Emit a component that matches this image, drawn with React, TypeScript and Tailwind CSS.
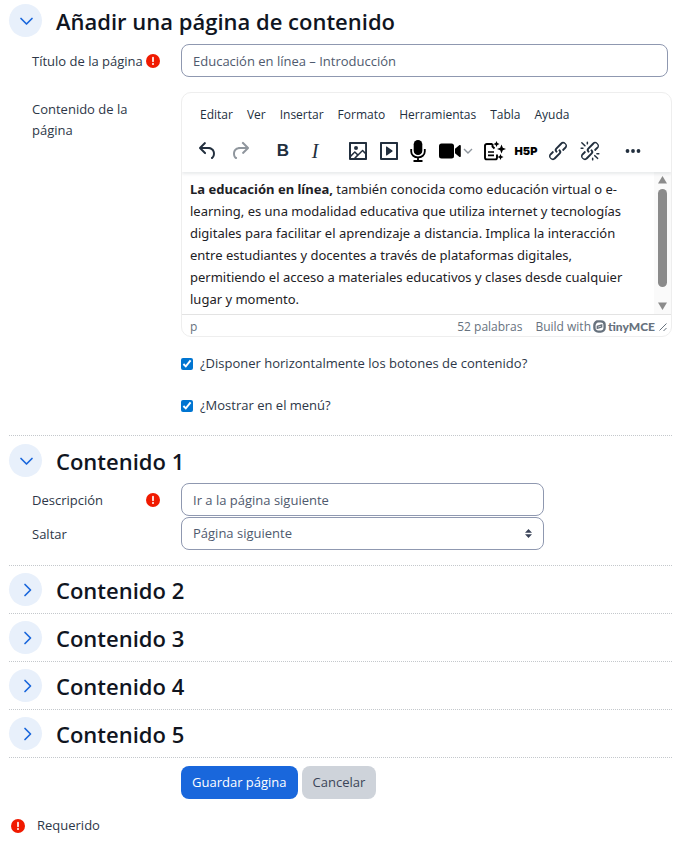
import React, { useState } from 'react';

const icons = {
  undo: "M6.4 8H12c3.7 0 6.2 2 6.8 5.1.6 2.7-.4 5.6-2.3 6.8a1 1 0 0 1-1-1.8c1.1-.6 1.8-2.7 1.4-4.6-.5-2.1-2.1-3.5-4.9-3.5H6.4l3.3 3.3a1 1 0 1 1-1.4 1.4l-5-5a1 1 0 0 1 0-1.4l5-5a1 1 0 0 1 1.4 1.4L6.4 8Z",
  redo: "M17.6 10H12c-2.8 0-4.4 1.4-4.9 3.5-.4 2 .3 4 1.4 4.6a1 1 0 1 1-1 1.8c-2-1.2-2.9-4.1-2.3-6.8.6-3 3-5.1 6.8-5.1h5.6l-3.3-3.3a1 1 0 1 1 1.4-1.4l5 5a1 1 0 0 1 0 1.4l-5 5a1 1 0 0 1-1.4-1.4l3.3-3.3Z",
  image: "m5 15.7 3.3-3.2c.3-.3.7-.3 1 0L12 15l4.1-4c.3-.4.8-.4 1 0l2 1.9V5H5v10.7ZM5 18V19h3l2.8-2.9-2-2L5 17.9Zm14-3-2.5-2.4-6.4 6.5H19v-4ZM4 3h16c.6 0 1 .4 1 1v16c0 .6-.4 1-1 1H4a1 1 0 0 1-1-1V4c0-.6.4-1 1-1Zm6 8a2 2 0 1 0 0-4 2 2 0 0 0 0 4Z",
  media: "M4 3h16c.6 0 1 .4 1 1v16c0 .6-.4 1-1 1H4a1 1 0 0 1-1-1V4c0-.6.4-1 1-1Zm1 2v14h14V5H5Zm4.8 2.6 5.6 4a.5.5 0 0 1 0 .8l-5.6 4A.5.5 0 0 1 9 16V8a.5.5 0 0 1 .8-.4Z",
  link: "M6.2 12.3a1 1 0 0 1 1.4 1.4l-2 2a2 2 0 1 0 2.6 2.8l4.8-4.8a1 1 0 0 0 0-1.4 1 1 0 1 1 1.4-1.3 2.9 2.9 0 0 1 0 4L9.6 20a3.9 3.9 0 0 1-5.5-5.5l2-2Zm11.6-.6a1 1 0 0 1-1.4-1.4l2-2a2 2 0 1 0-2.6-2.8L11 10.3a1 1 0 0 0 0 1.4A1 1 0 1 1 9.6 13a2.9 2.9 0 0 1 0-4L14.4 4a3.9 3.9 0 0 1 5.5 5.5l-2 2Z",
  unlink: "M6.2 12.3a1 1 0 0 1 1.4 1.4l-2 2a2 2 0 1 0 2.6 2.8l4.8-4.8a1 1 0 0 0 0-1.4 1 1 0 1 1 1.4-1.3 2.9 2.9 0 0 1 0 4L9.6 20a3.9 3.9 0 0 1-5.5-5.5l2-2Zm11.6-.6a1 1 0 0 1-1.4-1.4l2.1-2a2 2 0 1 0-2.7-2.8L11 10.3a1 1 0 0 0 0 1.4A1 1 0 1 1 9.6 13a2.9 2.9 0 0 1 0-4L14.4 4a3.9 3.9 0 0 1 5.5 5.5l-2 2ZM7.6 6.3a.8.8 0 0 1-1 1.1L3.3 4.2a.7.7 0 1 1 1-1l3.2 3.1ZM5.1 8.6a.8.8 0 0 1 0 1.5H3a.8.8 0 0 1 0-1.5H5Zm5-3.5a.8.8 0 0 1-1.5 0V3a.8.8 0 0 1 1.5 0V5Zm6 11.8a.8.8 0 0 1 1-1l3.2 3.2a.8.8 0 0 1-1 1L16 17Zm-2.2 2a.8.8 0 0 1 1.5 0V21a.8.8 0 0 1-1.5 0V19Zm5-3.5a.7.7 0 1 1 0-1.5H21a.8.8 0 0 1 0 1.5H19Z",
};

const menus = ["Editar", "Ver", "Insertar", "Formato", "Herramientas", "Tabla", "Ayuda"];

const Glyph: React.FC<{ d: string }> = ({ d }) => (
  <svg className="w-6 h-6" viewBox="0 0 24 24" fill="currentColor">
    <path fillRule="evenodd" d={d} />
  </svg>
);

const ToolButton: React.FC<{ label: string; className?: string; children: React.ReactNode }> = ({
  label,
  className = "w-8",
  children,
}) => (
  <button type="button" aria-label={label} className={`flex h-7 shrink-0 items-center justify-center ${className}`}>
    {children}
  </button>
);

const Required: React.FC = () => (
  <svg className="w-[14px] h-[14px] shrink-0" viewBox="0 0 14 14" role="img" aria-label="Requerido">
    <circle cx="7" cy="7" r="7" fill="#f01a00" />
    <path d="M7 3.7v3.6" stroke="#fff" strokeWidth="1.7" strokeLinecap="round" />
    <circle cx="7" cy="9.9" r="1" fill="#fff" />
  </svg>
);

const SectionHeader: React.FC<{ title: string; open: boolean; onToggle: () => void }> = ({ title, open, onToggle }) => (
  <div className="flex items-center gap-[14px]">
    <button
      type="button"
      aria-label={title}
      aria-expanded={open}
      onClick={onToggle}
      className="flex h-[33px] w-[33px] shrink-0 items-center justify-center rounded-full bg-[#e8f0fb] text-[#1967dc]"
    >
      <svg className="w-4 h-4" viewBox="0 0 16 16" fill="none" stroke="currentColor" strokeWidth="1.7" strokeLinecap="round" strokeLinejoin="round">
        <path d={open ? "M3 5.5 8.500 11 14 5.500" : "M7 2.500 12.500 8 7 13.500"} />
      </svg>
    </button>
    <h3 className="text-[22px] leading-8 font-semibold text-[#10151f]">{title}</h3>
  </div>
);

const Row: React.FC<{ label?: string; htmlFor?: string; required?: boolean; children: React.ReactNode }> = ({
  label,
  htmlFor,
  required,
  children,
}) => (
  <div className="flex pl-[23px]">
    <div className="flex w-[149px] shrink-0 items-start justify-between pr-[21px] pt-[7px]">
      {label && <label htmlFor={htmlFor} className="leading-[21px]">{label}</label>}
      {required && <span className="flex h-5 items-center"><Required /></span>}
    </div>
    <div className="min-w-0 flex-1">{children}</div>
  </div>
);

const Editor: React.FC = () => (
  <div className="overflow-hidden rounded-[10px] border border-[#eeeeee] bg-white">
    <div className="relative shadow-[0_2px_3px_rgba(34,47,62,0.10)]">
      <div className="flex h-11 items-center gap-[14px] pl-[18px] text-[#222f3e]">
        {menus.map((menu) => (
          <button key={menu} type="button" className="text-[12px]">{menu}</button>
        ))}
      </div>
      <div className="flex h-[35px] items-start gap-[11px] pl-[10px] text-[#222f3e]">
        <div className="flex">
          <ToolButton label="Deshacer"><Glyph d={icons.undo} /></ToolButton>
          <ToolButton label="Rehacer" className="w-8 opacity-50"><Glyph d={icons.redo} /></ToolButton>
        </div>
        <div className="flex">
          <ToolButton label="Negrita"><span className="font-['Liberation_Sans'] text-[17px] font-bold">B</span></ToolButton>
          <ToolButton label="Cursiva"><span className="font-['Liberation_Serif'] text-[20px] italic">I</span></ToolButton>
        </div>
        <div className="flex">
          <ToolButton label="Imagen" className="w-[31px]"><Glyph d={icons.image} /></ToolButton>
          <ToolButton label="Multimedia" className="w-[31px]"><Glyph d={icons.media} /></ToolButton>
          <ToolButton label="Grabar audio" className="w-7 text-black">
            <svg className="w-4 h-[22px]" viewBox="0 0 16 22" fill="none" stroke="currentColor" strokeWidth="1.8">
              <rect x="3.7" y="0" width="8.6" height="15" rx="4.3" fill="currentColor" stroke="none" />
              <path d="M1.2 9v2.500c0 3.500 3 5.900 6.800 5.900s6.800-2.400 6.800-5.900V9M8 17v4M3.500 21h9" />
            </svg>
          </ToolButton>
          <ToolButton label="Grabar vídeo" className="w-12 gap-[2px] text-black">
            <svg className="w-[22px] h-4" viewBox="0 0 22 16" fill="currentColor">
              <rect x="0" y="0.5" width="15" height="15" rx="2.5" />
              <path d="M16 5.800 20.200 2.200c.8-.6 1.600-.2 1.600.8v10c0 1-.8 1.400-1.600.8L16 10.200Z" />
            </svg>
            <svg className="w-[10px] h-[10px] text-[#8e959d]" viewBox="0 0 10 10" fill="none" stroke="currentColor" strokeWidth="1.4">
              <path d="m1 3 4 4 4-4" />
            </svg>
          </ToolButton>
          <ToolButton label="Asistente de IA" className="w-[30px] text-black">
            <svg className="w-[22px] h-5" viewBox="0 0 22 20" fill="none" stroke="currentColor" strokeWidth="1.9">
              <path d="M8.500 3H2.800C1.800 3 1 3.700 1 4.600v12.200c0 .9.800 1.600 1.800 1.600h8.400c1 0 1.800-.7 1.800-1.600v-3.300M8.500 3v2.500l2 2" />
              <path strokeWidth="1.6" d="M4 11h6M4 14.400h6" />
              <path stroke="none" fill="currentColor" d="m12.500 0 .9 2.100 2.100.9-2.100.9-.9 2.100-.9-2.100L9.500 3l2.100-.9ZM17.500 3.500l1.300 3.200L22 8l-3.200 1.300-1.300 3.200-1.300-3.200L13 8l3.200-1.300ZM16.500 13l.9 2.100 2.100.9-2.100.9-.9 2.100-.9-2.100-2.100-.9 2.100-.9Z" />
            </svg>
          </ToolButton>
          <ToolButton label="Insertar H5P" className="w-8 text-black">
            <span className="font-[Inter] text-[11px] font-black">H5P</span>
          </ToolButton>
          <ToolButton label="Enlace"><Glyph d={icons.link} /></ToolButton>
          <ToolButton label="Quitar enlace"><Glyph d={icons.unlink} /></ToolButton>
        </div>
        <ToolButton label="Más">
          <svg className="w-4 h-4" viewBox="0 0 16 16" fill="currentColor">
            <circle cx="2.5" cy="8" r="1.9" />
            <circle cx="8" cy="8" r="1.9" />
            <circle cx="13.5" cy="8" r="1.9" />
          </svg>
        </ToolButton>
      </div>
    </div>

    <div className="flex h-[142px]">
      <div
        id="contents"
        role="textbox"
        aria-multiline="true"
        aria-label="Contenido de la página"
        contentEditable
        suppressContentEditableWarning
        className="min-w-0 flex-1 overflow-hidden pl-2 pr-3 pt-[6px] font-['Noto_Sans',sans-serif] text-[13px] leading-[22px] text-[#1d2125] outline-none"
      >
        <p>
          <strong>La educación en línea,</strong> también conocida como educación virtual o e-learning, es una
          modalidad educativa que utiliza internet y tecnologías digitales para facilitar el aprendizaje a distancia.
          Implica la interacción entre estudiantes y docentes a través de plataformas digitales, permitiendo el acceso
          a materiales educativos y clases desde cualquier lugar y momento.
        </p>
      </div>
      <div className="flex w-[17px] flex-col items-center bg-[#fafafa] py-1" aria-hidden="true">
        <svg className="w-[9px] h-2" viewBox="0 0 9 8" fill="#8b8b8b"><path d="M4.500 0 9 7.500H0Z" /></svg>
        <div className="mt-[5px] h-[98px] w-[9px] rounded-full bg-[#8b8b8b]" />
        <svg className="mt-auto w-[9px] h-2" viewBox="0 0 9 8" fill="#8b8b8b"><path d="M4.500 8 9 .5H0Z" /></svg>
      </div>
    </div>

    <div className="flex h-[22px] items-center border-t border-[#e3e3e3] pt-[2px] pl-2 pr-[3px] text-[12px] text-[#67727e]">
      <span className="flex-1">p</span>
      <span>52 palabras</span>
      <a href="#tiny" className="ml-[13px] flex items-center gap-[2px]">
        Build with
        <svg className="w-[13px] h-[13px]" viewBox="0 0 12 12" fill="none" stroke="currentColor">
          <path strokeWidth="2.2" d="M3.800 1.300h3.400c2 0 3.500 1.200 3.500 3.100v2.800c0 2-1.500 3.500-3.500 3.500H4.800c-2 0-3.500-1.500-3.500-3.500V4.800c0-1.400.9-2.600 2.500-3.500Z" />
          <path strokeWidth="1.3" d="M4 7.700V5.800l4-1.300v1.900Z" />
        </svg>
        <span className="font-[Lato] text-[12px] font-black">tinyMCE</span>
      </a>
      <svg className="ml-[3px] w-[10px] h-[10px]" viewBox="0 0 10 10" fill="none" stroke="currentColor" strokeWidth="1">
        <path d="m1.500 8.500 7-7M5.500 9l3-3" />
      </svg>
    </div>
  </div>
);

const inputStyle =
  "block h-[33px] w-full rounded-lg border border-[#8f98b0] bg-white px-[11px] text-[13px] text-[#4f5a6e] outline-none";

const App: React.FC = () => {
  const [open, setOpen] = useState<Record<number, boolean>>({ 0: true, 1: true });
  const toggle = (n: number) => setOpen((prev) => ({ ...prev, [n]: !prev[n] }));

  return (
    <form
      onSubmit={(e) => e.preventDefault()}
      className="bg-white pl-[9px] pr-2 pb-2 font-['Open_Sans','Noto_Sans',sans-serif] text-[13px] text-[#2d3748]"
    >
      <section className="border-b border-dotted border-[#c4c8cc] pt-1">
        <SectionHeader title="Añadir una página de contenido" open={!!open[0]} onToggle={() => toggle(0)} />
        {open[0] && (
          <div className="pt-[7px] pb-[19px]">
            <Row label="Título de la página" htmlFor="title" required>
              <div className="pr-1">
                <input id="title" type="text" defaultValue="Educación en línea – Introducción" className={inputStyle} />
              </div>
            </Row>
            <div className="mt-[15px]">
              <Row label="Contenido de la página" htmlFor="contents">
                <Editor />
              </Row>
            </div>
            <div className="mt-4 flex flex-col gap-[21px] pl-[172px]">
              <label className="flex h-[21px] items-center gap-[7px]">
                <input type="checkbox" defaultChecked className="h-3 w-3 accent-[#0075d1]" />
                ¿Disponer horizontalmente los botones de contenido?
              </label>
              <label className="flex h-[21px] items-center gap-[7px]">
                <input type="checkbox" defaultChecked className="h-3 w-3 accent-[#0075d1]" />
                ¿Mostrar en el menú?
              </label>
            </div>
          </div>
        )}
      </section>

      <section className="border-b border-dotted border-[#c4c8cc] pt-2">
        <SectionHeader title="Contenido 1" open={!!open[1]} onToggle={() => toggle(1)} />
        {open[1] && (
          <div className="flex flex-col gap-px pt-[6px] pb-[15px]">
            <Row label="Descripción" htmlFor="description" required>
              <input
                id="description"
                type="text"
                defaultValue="Ir a la página siguiente"
                className={`${inputStyle} max-w-[363px]`}
              />
            </Row>
            <Row label="Saltar" htmlFor="jump">
              <div className="relative max-w-[363px]">
                <select id="jump" className={`${inputStyle} appearance-none`}>
                  <option>Página siguiente</option>
                </select>
                <svg
                  className="pointer-events-none absolute right-3 top-3 w-[7px] h-[9px]"
                  viewBox="0 0 7 9"
                  fill="#3a4358"
                >
                  <path d="M3.500 0 7 3.700H0ZM3.500 9 0 5.300h7Z" />
                </svg>
              </div>
            </Row>
          </div>
        )}
      </section>

      {[2, 3, 4, 5].map((n) => (
        <section key={n} className="border-b border-dotted border-[#c4c8cc] py-[7px]">
          <SectionHeader title={`Contenido ${n}`} open={!!open[n]} onToggle={() => toggle(n)} />
        </section>
      ))}

      <div className="mt-2 flex gap-1 pl-[172px]">
        <button type="submit" className="h-[33px] rounded-lg bg-[#1967dc] px-[11px] text-white">
          Guardar página
        </button>
        <button type="button" className="h-[33px] rounded-lg bg-[#ced3da] px-[11px] text-[#3b4558]">
          Cancelar
        </button>
      </div>

      <div className="mt-4 flex items-center gap-3 pl-[2px] leading-[21px]">
        <Required />
        Requerido
      </div>
    </form>
  );
};

export default App;
